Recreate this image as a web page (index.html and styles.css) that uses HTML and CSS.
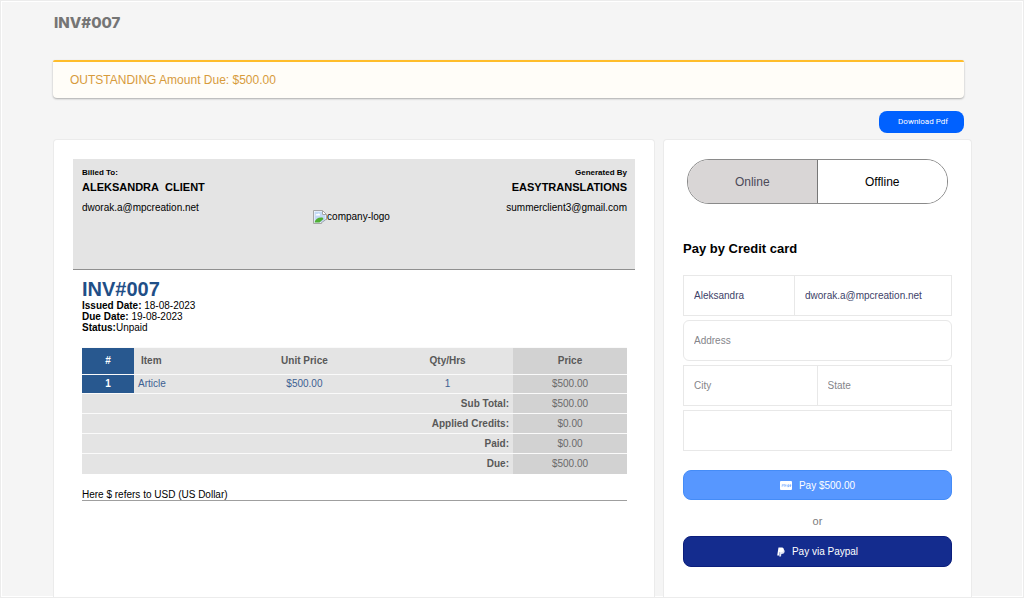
FILE: index.html
```html
<!DOCTYPE html>
<html lang="en">
<head>
<meta charset="utf-8">
<meta name="viewport" content="width=device-width, initial-scale=1">
<title>INV#007</title>
<link rel="stylesheet" href="styles.css">
</head>
<body>
<div class="page">
  <h1 class="page-title">INV#007</h1>
  <div class="alert" role="status">OUTSTANDING Amount Due: $500.00</div>
  <div class="actions"><button class="download" type="button">Download Pdf</button></div>
  <main class="columns">
    <section class="panel">
      <header class="parties">
        <div class="party">
          <p class="party-label">Billed To:</p>
          <p class="party-name">ALEKSANDRA&nbsp; CLIENT</p>
          <p class="party-mail">dworak.a@mpcreation.net</p>
        </div>
        <div class="logo">
          <svg class="logo-icon" viewBox="0 0 14 14" aria-hidden="true">
            <path d="M.5.5h9l4 4v9H.5z" fill="#fff" stroke="#a5a5a5"/>
            <path d="M1.500 1.500h7.500v3.500h3.500v7.500h-11z" fill="#c3d9f5"/>
            <path d="M2.500 5.500a1.500 1.500 0 0 1 2-1.500 1.500 1.500 0 0 1 2.500 1.500z" fill="#fff"/>
            <path d="M1.500 12.500c1-4 4-5.500 8-5l1 1.500-4 3.500z" fill="#4fae32"/>
            <path d="M8 14l6-4.500V14z" fill="#e4e4e4"/>
            <path d="M7.500 13.500l6-4.500M9.500.5v4h4" fill="none" stroke="#a5a5a5"/>
          </svg><span>company-logo</span>
        </div>
        <div class="party party-right">
          <p class="party-label">Generated By</p>
          <p class="party-name">EASYTRANSLATIONS</p>
          <p class="party-mail">summerclient3@gmail.com</p>
        </div>
      </header>
      <div class="invoice">
        <h2 class="invoice-number">INV#007</h2>
        <p class="meta"><b>Issued Date:</b> 18-08-2023</p>
        <p class="meta"><b>Due Date:</b> 19-08-2023</p>
        <p class="meta"><b>Status:</b>Unpaid</p>
        <table class="items">
          <colgroup><col class="col-no"><col class="col-item"><col class="col-unit"><col class="col-qty"><col class="col-price"></colgroup>
          <thead>
            <tr><th class="no">#</th><th class="item">Item</th><th>Unit Price</th><th>Qty/Hrs</th><th class="price">Price</th></tr>
          </thead>
          <tbody>
            <tr class="line"><th class="no" scope="row">1</th><td class="item">Article</td><td>$500.00</td><td>1</td><td class="price">$500.00</td></tr>
          </tbody>
          <tfoot>
            <tr><th class="sum" colspan="4" scope="row">Sub Total:</th><td class="price">$500.00</td></tr>
            <tr><th class="sum" colspan="4" scope="row">Applied Credits:</th><td class="price">$0.00</td></tr>
            <tr><th class="sum" colspan="4" scope="row">Paid:</th><td class="price">$0.00</td></tr>
            <tr><th class="sum" colspan="4" scope="row">Due:</th><td class="price">$500.00</td></tr>
          </tfoot>
        </table>
        <p class="note">Here $ refers to USD (US Dollar)</p>
      </div>
    </section>
    <section class="panel">
      <div class="toggle" role="group" aria-label="Payment mode">
        <button class="toggle-option toggle-active" type="button" aria-pressed="true">Online</button>
        <button class="toggle-option" type="button" aria-pressed="false">Offline</button>
      </div>
      <h2 class="pay-title">Pay by Credit card</h2>
      <form class="pay-form">
        <div class="row row-contact">
          <input class="field" type="text" aria-label="Name" value="Aleksandra">
          <input class="field" type="email" aria-label="Email" value="dworak.a@mpcreation.net">
        </div>
        <div class="row"><input class="field field-round" type="text" aria-label="Address" placeholder="Address"></div>
        <div class="row row-half">
          <input class="field" type="text" aria-label="City" placeholder="City">
          <input class="field" type="text" aria-label="State" placeholder="State">
        </div>
        <div class="row"><input class="field" type="text" aria-label="Card number"></div>
        <button class="pay pay-card" type="button">
          <svg class="icon-card" viewBox="0 0 24 18" aria-hidden="true">
            <rect width="24" height="18" rx="2" fill="#fff"/>
            <path d="M6 7.500c-2-1-3 .7-1.500 1.300 1.800.7.800 2.500-1.500 1.500M8 6v4.500h1.500M7 7.500h2.500M11 11V7.500h1.500M14 7.500V11M16 12.500v-5h2V11h-2M22 11h-2V7.500h2v1.700h-2" fill="none" stroke="#5797ff"/>
          </svg>
          Pay $500.00
        </button>
        <p class="or">or</p>
        <button class="pay pay-paypal" type="button">
          <svg class="icon-paypal" viewBox="0 0 384 512" aria-hidden="true">
            <path fill="#dfe3f3" d="M111 296L300 100l57 52c26 26 28 62 19 96-16 82-70 111-140 111-15 0-24-3-29 19-14 96-13 85-14 90-1 9-8 15-17 15h-63c-8 0-12-6-11-13z"/>
            <path fill="#fff" d="M111 296c-4 19-18 109-22 134-1 2-1 3-3 3H12c-8 0-13-7-12-14L58 47c1-10 10-17 20-17 151 0 164-4 203 11 60 23 65 79 44 140-21 63-73 90-140 91-43 1-69-7-74 24z"/>
          </svg>
          Pay via Paypal
        </button>
      </form>
    </section>
  </main>
</div>
</body>
</html>
```

FILE: styles.css
```css
* { box-sizing: border-box; }
body, h1, h2, p { margin: 0; }
body { font-family: "Liberation Sans", Arial, sans-serif; background: #f5f5f5; color: #000; }
button, input { font-family: inherit; }

.page {
  display: flex;
  flex-direction: column;
  min-height: 100vh;
  padding: 12px 51px 0 52px;
  border: 1px solid #ececec;
  box-shadow: inset 0 0 0 1px #fff;
}
.page-title { padding-left: 1px; font: 800 15px/20px Inter, sans-serif; color: #757575; }
.alert {
  margin: 27px 8px 0 0;
  padding: 0 17px;
  line-height: 36px;
  font-size: 12px;
  color: #d79b3c;
  background: #fffdf8;
  border-top: 2px solid #ffbd2b;
  border-radius: 2px 2px 4px 4px;
  box-shadow: 0 1px 2px rgba(0, 0, 0, .3);
}
.actions { display: flex; justify-content: flex-end; padding: 13px 8px 6px 0; }
.download {
  height: 22px;
  padding: 0 16px 0 19px;
  font: 8px/22px Roboto, sans-serif;
  color: #fff;
  background: #0061ff;
  border: 0;
  border-radius: 8px;
}

.columns { display: grid; grid-template-columns: 602fr 309fr; gap: 8px; flex: 1; }
.panel {
  padding: 19px;
  background: #fff;
  border: 1px solid #ebebeb;
  border-bottom: 0;
  border-radius: 4px 4px 0 0;
}

.parties {
  display: grid;
  grid-template-columns: 1fr auto 1fr;
  min-height: 111px;
  padding: 9px 8px 8px 9px;
  background: #e4e4e4;
  border-bottom: 1px solid #8f8f8f;
}
.party-right { text-align: right; }
.party-label { font-size: 8px; line-height: 10px; font-weight: bold; }
.party-name { font-size: 11px; line-height: 18px; font-weight: bold; }
.party-mail { font-size: 10px; line-height: 24px; }
.logo {
  display: flex;
  align-items: center;
  align-self: center;
  padding: 4px 6px 0 0;
  font-size: 10px;
  line-height: 14px;
}
.logo-icon { width: 14px; height: 14px; }

.invoice { padding: 8px 8px 8px 9px; }
.invoice-number { font-size: 20px; line-height: 22px; color: #1f4f87; }
.meta { font-size: 10px; line-height: 11px; }

.items {
  width: 100%;
  margin-top: 14px;
  table-layout: fixed;
  border-collapse: collapse;
  font-size: 10px;
  line-height: 12px;
  text-align: center;
  color: #585858;
}
.col-no { width: 52px; }
.col-item { width: 17%; }
.col-qty { width: 24%; }
.col-price { width: 114px; }
.items th, .items td { height: 20px; padding: 0 4px; background: #e4e4e4; border-top: 1px solid #fafafa; }
.items thead th { height: 27px; }
.items .line th, .items .line td { height: 19px; }
.items .item { text-align: left; }
.items thead .item { padding-left: 7px; }
.items .line td { color: #3d5f92; }
.items .no { color: #fff; background: #28588f; }
.items .sum { text-align: right; }
.items .price, .items .line .price { color: #6a6a6a; background: #d2d2d2; }
.items thead .price { color: #585858; }
.note { margin-top: 15px; font-size: 10px; line-height: 11px; border-bottom: 1px solid #9f9f9f; }

.toggle {
  display: grid;
  grid-template-columns: 1fr 1fr;
  height: 45px;
  margin: 0 4px;
  overflow: hidden;
  border: 1px solid #8a8a8a;
  border-radius: 22px;
}
.toggle-option { font-size: 12px; color: #000; background: #fff; border: 0; }
.toggle-active { color: #4c4a58; background: #d9d6d6; border-right: 1px solid #777; }
.pay-title { margin: 36px 0 17px; font-size: 13px; line-height: 18px; }

.row { display: grid; margin-bottom: 4px; }
.row-contact { grid-template-columns: 112fr 157fr; }
.row-half { grid-template-columns: 1fr 1fr; }
.field {
  width: 100%;
  min-width: 0;
  height: 41px;
  padding: 0 10px;
  font-size: 10px;
  color: #3d4268;
  background: #fff;
  border: 1px solid #e8e8e8;
  border-radius: 0;
}
.field + .field { border-left: 0; }
.field::placeholder { color: #85858a; opacity: 1; }
.field-round { border-radius: 6px; }
.pay {
  display: flex;
  align-items: center;
  justify-content: center;
  gap: 7px;
  width: 100%;
  height: 30px;
  padding: 0;
  font-size: 10px;
  color: #fff;
  border: 1px solid #458cf7;
  border-radius: 8px;
}
.pay-card { margin-top: 19px; background: #5797ff; }
.pay-paypal { height: 31px; background: #142c8e; border-color: #0b1e7c; }
.icon-card { width: 12px; height: 9px; }
.icon-paypal { width: 8px; height: 10px; }
.or { padding: 11px 0 5px; font-size: 11px; line-height: 20px; text-align: center; color: #7c7c7c; }
```
